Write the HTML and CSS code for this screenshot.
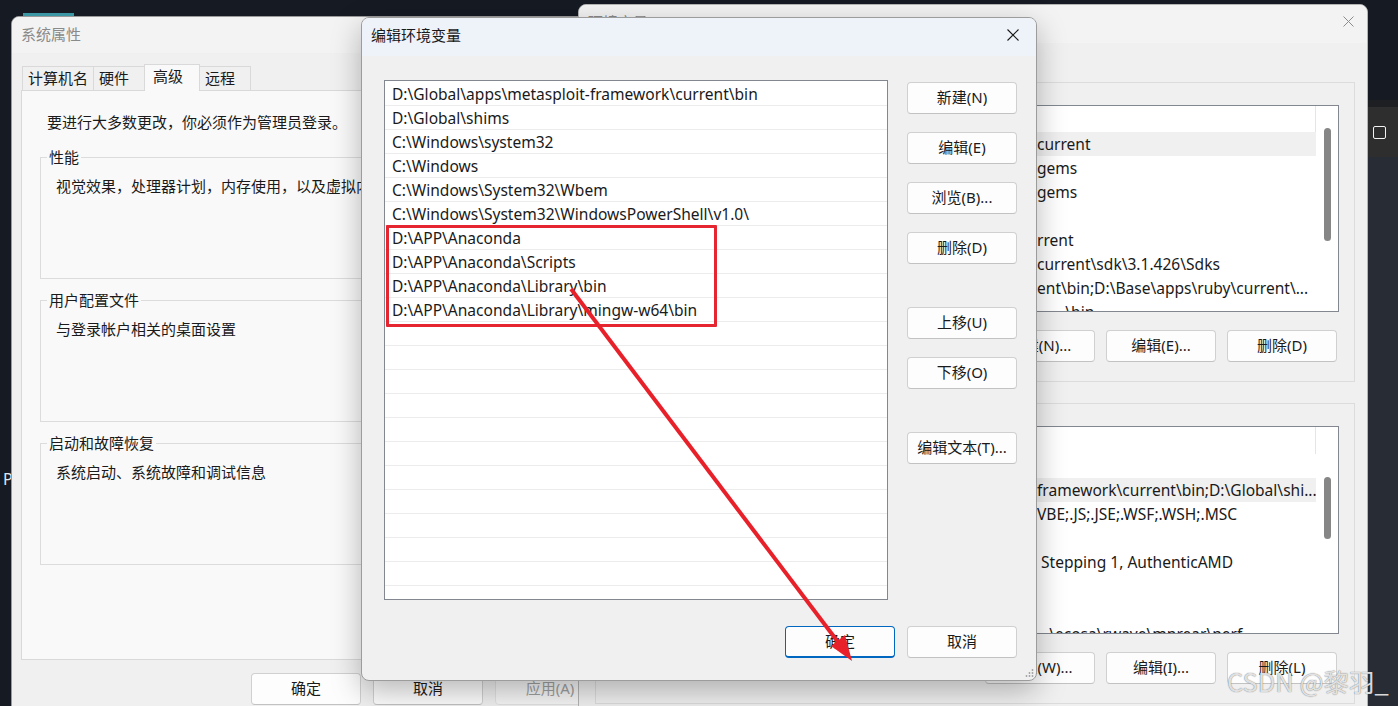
FILE: index.html
```html
<!DOCTYPE html>
<html lang="zh-CN">
<head>
  <meta charset="UTF-8">
  <title>编辑环境变量</title>
  <link rel="stylesheet" href="styles.css">
</head>
<body>
  <div class="desktop">

    <!-- things peeking out from behind the windows -->
    <div class="dock-strip"></div>
    <span class="edge-text">P</span>
    <div class="side-app">
      <div class="side-band"><span class="side-square"></span></div>
    </div>

    <!-- 系统属性 -->
    <section class="win sysprops">
      <div class="titlebar">系统属性</div>
      <div class="sys-body">
        <div class="tabs">
          <span class="tab">计算机名</span>
          <span class="tab">硬件</span>
          <span class="tab active">高级</span>
          <span class="tab">远程</span>
        </div>
        <div class="tab-panel">
          <p class="notice">要进行大多数更改，你必须作为管理员登录。</p>
          <fieldset class="group">
            <legend>性能</legend>
            <div class="group-body">
              <span>视觉效果，处理器计划，内存使用，以及虚拟内存</span>
              <button class="btn">设置(S)...</button>
            </div>
          </fieldset>
          <fieldset class="group">
            <legend>用户配置文件</legend>
            <div class="group-body">
              <span>与登录帐户相关的桌面设置</span>
              <button class="btn">设置(E)...</button>
            </div>
          </fieldset>
          <fieldset class="group">
            <legend>启动和故障恢复</legend>
            <div class="group-body">
              <span>系统启动、系统故障和调试信息</span>
              <button class="btn">设置(T)...</button>
            </div>
          </fieldset>
        </div>
        <div class="win-buttons">
          <button class="btn">确定</button>
          <button class="btn">取消</button>
          <button class="btn" disabled>应用(A)</button>
        </div>
      </div>
    </section>

    <!-- 环境变量 -->
    <section class="win envvars">
      <div class="titlebar">
        环境变量
        <span class="close close-small">
          <svg width="11" height="11" viewBox="0 0 11 11"><path d="M0.5 0.5 L10.5 10.5 M10.5 0.5 L0.5 10.5" stroke="#8c8c8c" stroke-width="1" fill="none"/></svg>
        </span>
      </div>
      <div class="env-body">
        <fieldset class="env-group">
          <legend>Administrator 的用户变量(U)</legend>
          <div class="var-list user-list">
            <div class="var-rows">
              <div class="var-head"><span>变量</span><span>值</span></div>
              <div class="var-row sel"><span class="col-name">ChocolateyInstall</span><span class="col-val">current</span></div>
              <div class="var-row"><span class="col-name">GEM_HOME</span><span class="col-val">gems</span></div>
              <div class="var-row"><span class="col-name">GEM_PATH</span><span class="col-val">gems</span></div>
              <div class="var-row"><span class="col-name">GOPATH</span><span class="col-val"></span></div>
              <div class="var-row"><span class="col-name">JAVA_HOME</span><span class="col-val">rrent</span></div>
              <div class="var-row"><span class="col-name">MSBuildSDKsPath</span><span class="col-val">current\sdk\3.1.426\Sdks</span></div>
              <div class="var-row"><span class="col-name">Path</span><span class="col-val">ent\bin;D:\Base\apps\ruby\current\...</span></div>
              <div class="var-row"><span class="col-name">PYTHONHOME</span><span class="col-val">       \bin</span></div>
            </div>
            <div class="v-scroll"><div class="v-thumb thumb-user"></div></div>
          </div>
          <div class="env-buttons">
            <button class="btn">新建(N)...</button>
            <button class="btn">编辑(E)...</button>
            <button class="btn">删除(D)</button>
          </div>
        </fieldset>

        <fieldset class="env-group">
          <legend>系统变量(S)</legend>
          <div class="var-list sys-list">
            <div class="var-rows">
              <div class="var-head"><span>变量</span><span>值</span></div>
              <div class="var-row"><span class="col-name">OS</span><span class="col-val"></span></div>
              <div class="var-row sel"><span class="col-name">Path</span><span class="col-val">framework\current\bin;D:\Global\shi...</span></div>
              <div class="var-row"><span class="col-name">PATHEXT</span><span class="col-val">VBE;.JS;.JSE;.WSF;.WSH;.MSC</span></div>
              <div class="var-row"><span class="col-name">PROCESSOR_ARCHITECTURE</span><span class="col-val"></span></div>
              <div class="var-row"><span class="col-name">PROCESSOR_IDENTIFIER</span><span class="col-val"> Stepping 1, AuthenticAMD</span></div>
              <div class="var-row"><span class="col-name">PROCESSOR_LEVEL</span><span class="col-val"></span></div>
              <div class="var-row"><span class="col-name">PROCESSOR_REVISION</span><span class="col-val"></span></div>
              <div class="var-row"><span class="col-name">PSModulePath</span><span class="col-val">   \ecosa\rwave\mnrear\perf</span></div>
            </div>
            <div class="v-scroll"><div class="v-thumb thumb-sys"></div></div>
          </div>
          <div class="env-buttons">
            <button class="btn">新建(W)...</button>
            <button class="btn">编辑(I)...</button>
            <button class="btn">删除(L)</button>
          </div>
        </fieldset>
      </div>
    </section>

    <!-- 编辑环境变量 -->
    <section class="win dialog">
      <div class="titlebar">
        编辑环境变量
        <span class="close">
          <svg width="12" height="12" viewBox="0 0 12 12"><path d="M0.5 0.5 L11.5 11.5 M11.5 0.5 L0.5 11.5" stroke="#1a1a1a" stroke-width="1.1" fill="none"/></svg>
        </span>
      </div>
      <div class="dialog-body">
        <div class="dialog-main">
          <div class="path-box">
            <ul class="path-list">
              <li>D:\Global\apps\metasploit-framework\current\bin</li>
              <li>D:\Global\shims</li>
              <li>C:\Windows\system32</li>
              <li>C:\Windows</li>
              <li>C:\Windows\System32\Wbem</li>
              <li>C:\Windows\System32\WindowsPowerShell\v1.0\</li>
              <li>D:\APP\Anaconda</li>
              <li>D:\APP\Anaconda\Scripts</li>
              <li>D:\APP\Anaconda\Library\bin</li>
              <li>D:\APP\Anaconda\Library\mingw-w64\bin</li>
            </ul>
            <div class="highlight-box"></div>
          </div>
          <div class="side-buttons">
            <button class="btn">新建(N)</button>
            <button class="btn">编辑(E)</button>
            <button class="btn">浏览(B)...</button>
            <button class="btn">删除(D)</button>
            <button class="btn spaced">上移(U)</button>
            <button class="btn">下移(O)</button>
            <button class="btn spaced">编辑文本(T)...</button>
          </div>
        </div>
        <div class="dialog-footer">
          <button class="btn default">确定</button>
          <button class="btn">取消</button>
        </div>
      </div>
      <svg class="grip" width="10" height="10" viewBox="0 0 10 10">
        <circle cx="8.5" cy="2" r="0.9"/>
        <circle cx="8.5" cy="5" r="0.9"/>
        <circle cx="5.5" cy="5" r="0.9"/>
        <circle cx="8.5" cy="8" r="0.9"/>
        <circle cx="5.5" cy="8" r="0.9"/>
        <circle cx="2.5" cy="8" r="0.9"/>
      </svg>
    </section>

    <!-- red annotation arrow -->
    <svg class="annotation" width="1398" height="706" viewBox="0 0 1398 706">
      <line x1="571" y1="289" x2="838" y2="642" stroke="#e8202a" stroke-width="4"/>
      <polygon points="852,661 831,646 845,635" fill="#e8202a"/>
    </svg>

    <div class="watermark">CSDN @黎羽_</div>
  </div>
</body>
</html>
```

FILE: styles.css
```css
* {
  box-sizing: border-box;
}

body {
  margin: 0;
  background-color: #151a23;
  font-family: "Noto Sans", "Noto Sans CJK SC", sans-serif;
  font-size: 15px;
  color: #1a1a1a;
  overflow: hidden;
}

.desktop {
  position: relative;
  width: 1398px;
  height: 706px;
  overflow: hidden;
}

/* background bits */
.dock-strip {
  position: absolute;
  left: 23px;
  top: 13px;
  width: 51px;
  height: 3px;
  background: #3b97a3;
}

.edge-text {
  position: absolute;
  left: 3px;
  top: 468px;
  font-size: 16px;
  color: #dfe6f1;
}

.side-app {
  position: absolute;
  left: 1368px;
  top: 100px;
  width: 30px;
  height: 606px;
  background: #282c34;
  border-top: 7px solid #1e1f23;
}

.side-band {
  height: 50px;
  background: #2e2e2f;
  display: flex;
  align-items: center;
  padding-left: 5px;
}

.side-square {
  width: 13px;
  height: 13px;
  border: 1.5px solid #f2f2f2;
  border-radius: 2px;
}

/* windows */
.win {
  position: absolute;
  background: #f0f0f0;
  border: 1px solid #a8a8a8;
  border-radius: 8px;
  overflow: hidden;
}

.titlebar {
  height: 38px;
  display: flex;
  align-items: center;
  justify-content: space-between;
  padding: 0 0 5px 9px;
  background: #f3f3f3;
  color: #8a8a8a;
}

.close {
  width: 46px;
  height: 100%;
  display: flex;
  align-items: center;
  justify-content: center;
}

.close-small {
  width: 38px;
}

.btn {
  width: 110px;
  height: 32px;
  padding: 0 0 3px;
  border: 1px solid #d0d0d0;
  border-bottom-color: #c2c2c2;
  border-radius: 4px;
  background: #fdfdfd;
  font: inherit;
  color: #1a1a1a;
  white-space: nowrap;
}

.btn:disabled {
  color: #a0a0a0;
  background: #f6f6f6;
  border-color: #e2e2e2;
}

.btn.default {
  border-color: #0067c0;
  border-bottom-width: 2px;
}

fieldset {
  margin: 0;
  padding: 0;
  min-width: 0;
  border: 1px solid #dcdcdc;
}

legend {
  margin-left: 6px;
  padding: 0 2px;
  line-height: 20px;
}

/* 系统属性 */
.sysprops {
  left: 11px;
  top: 16px;
  width: 605px;
  height: 720px;
  border-color: #9a9a9a;
}

.sysprops .titlebar {
  height: 36px;
  padding-bottom: 4px;
}

.sys-body {
  padding: 0 10px 0 9px;
}

.tabs {
  display: flex;
  align-items: flex-end;
  padding: 11px 0 0 1px;
}

.tab {
  height: 24px;
  margin-bottom: 1px;
  padding: 0 5px;
  min-width: 52px;
  border: 1px solid #d9d9d9;
  border-bottom: none;
  background: #f0f0f0;
  line-height: 22px;
}

.tab + .tab {
  margin-left: -1px;
}

.tab.active {
  position: relative;
  z-index: 1;
  height: 27px;
  margin-bottom: 0;
  min-width: 56px;
  padding: 0 12px 0 8px;
  background: #f9f9f9;
  line-height: 23px;
}

.tab-panel {
  height: 570px;
  margin-top: -1px;
  padding: 21px 18px 0;
  border: 1px solid #d9d9d9;
  background: #f9f9f9;
}

.notice {
  margin: 0;
  padding-left: 7px;
  line-height: 20px;
}

.group {
  margin-top: 11px;
}

.notice + .group {
  margin-top: 15px;
}

.group-body {
  height: 111px;
  padding: 9px 15px 9px;
  display: flex;
  flex-direction: column;
  justify-content: space-between;
  line-height: 20px;
  white-space: nowrap;
}

.group-body .btn {
  align-self: flex-end;
}

.win-buttons {
  display: flex;
  justify-content: flex-end;
  gap: 12px;
  margin-top: 13px;
}

/* 环境变量 */
.envvars {
  left: 578px;
  top: 4px;
  width: 790px;
  height: 720px;
  border-color: #b4b4b4;
}

.env-body {
  padding: 29px 12px 0 16px;
}

.env-group {
  padding: 0 15px 19px 16px;
}

.env-group + .env-group {
  margin-top: 11px;
}

.var-list {
  display: flex;
  margin-top: 13px;
  border: 1px solid #828790;
  background: #fff;
  font-size: 15.55px;
  overflow: hidden;
}

.user-list {
  height: 207px;
}

.sys-list {
  height: 208px;
}

.var-rows {
  flex: 1;
  overflow: hidden;
}

.var-head {
  height: 26px;
  display: flex;
  gap: 150px;
  padding-left: 8px;
  line-height: 26px;
  font-size: 15px;
  border-right: 1px solid #e5e5e5;
}

.sys-list .var-head {
  height: 27px;
}

.var-row {
  display: flex;
  height: 24px;
  line-height: 24px;
  white-space: pre;
}

.var-row.sel {
  background: #f0f0f0;
}

.col-name {
  flex: 0 0 424px;
  padding-left: 8px;
  overflow: hidden;
}

.col-val {
  flex: 1;
  overflow: hidden;
}

.v-scroll {
  flex: none;
  width: 22px;
}

.v-thumb {
  width: 7px;
  margin-left: 8px;
  border-radius: 4px;
  background: #868686;
}

.thumb-user {
  margin-top: 22px;
  height: 113px;
}

.thumb-sys {
  margin-top: 50px;
  height: 62px;
}

.env-buttons {
  display: flex;
  justify-content: flex-end;
  gap: 11px;
  margin-top: 18px;
  padding-right: 2px;
}

/* 编辑环境变量 */
.dialog {
  left: 361px;
  top: 17px;
  width: 676px;
  height: 664px;
  border-color: #9c9c9c;
  box-shadow: 0 10px 30px rgba(0, 0, 0, 0.28);
}

.dialog .titlebar {
  background: #eef2f9;
  color: #1a1a1a;
}

.dialog-body {
  padding: 24px 19px 0 22px;
}

.dialog-main {
  display: flex;
  gap: 19px;
}

.path-box {
  position: relative;
  width: 504px;
  height: 520px;
  border: 1px solid #828790;
  background-color: #fff;
  overflow: hidden;
}

.path-list {
  height: 100%;
  margin: 0;
  padding: 1px 0 0;
  list-style: none;
  font-size: 15.55px;
  background-image: repeating-linear-gradient(to bottom, transparent 0 23px, #ececec 23px 24px);
  background-origin: content-box;
  background-clip: padding-box;
}

.path-list li {
  height: 24px;
  line-height: 24px;
  padding-left: 7px;
  white-space: nowrap;
}

.highlight-box {
  position: absolute;
  left: 1px;
  top: 144px;
  width: 331px;
  height: 102px;
  border: 3px solid #e5252f;
  border-radius: 1px;
}

.side-buttons {
  display: flex;
  flex-direction: column;
  gap: 18px;
  padding-top: 2px;
}

.side-buttons .spaced {
  margin-top: 25px;
}

.dialog-footer {
  display: flex;
  justify-content: flex-end;
  gap: 12px;
  margin-top: 26px;
}

.grip {
  position: absolute;
  right: 2px;
  bottom: 2px;
  fill: #a0a0a0;
}

/* overlays */
.annotation {
  position: absolute;
  left: 0;
  top: 0;
  pointer-events: none;
}

.watermark {
  position: absolute;
  left: 1227px;
  top: 668px;
  font-family: "Noto Sans CJK SC", sans-serif;
  font-size: 25.5px;
  line-height: 1;
  color: rgba(255, 255, 255, 0.82);
  text-shadow: 0 0 1px rgba(60, 60, 60, 0.9);
  white-space: pre;
}
```
